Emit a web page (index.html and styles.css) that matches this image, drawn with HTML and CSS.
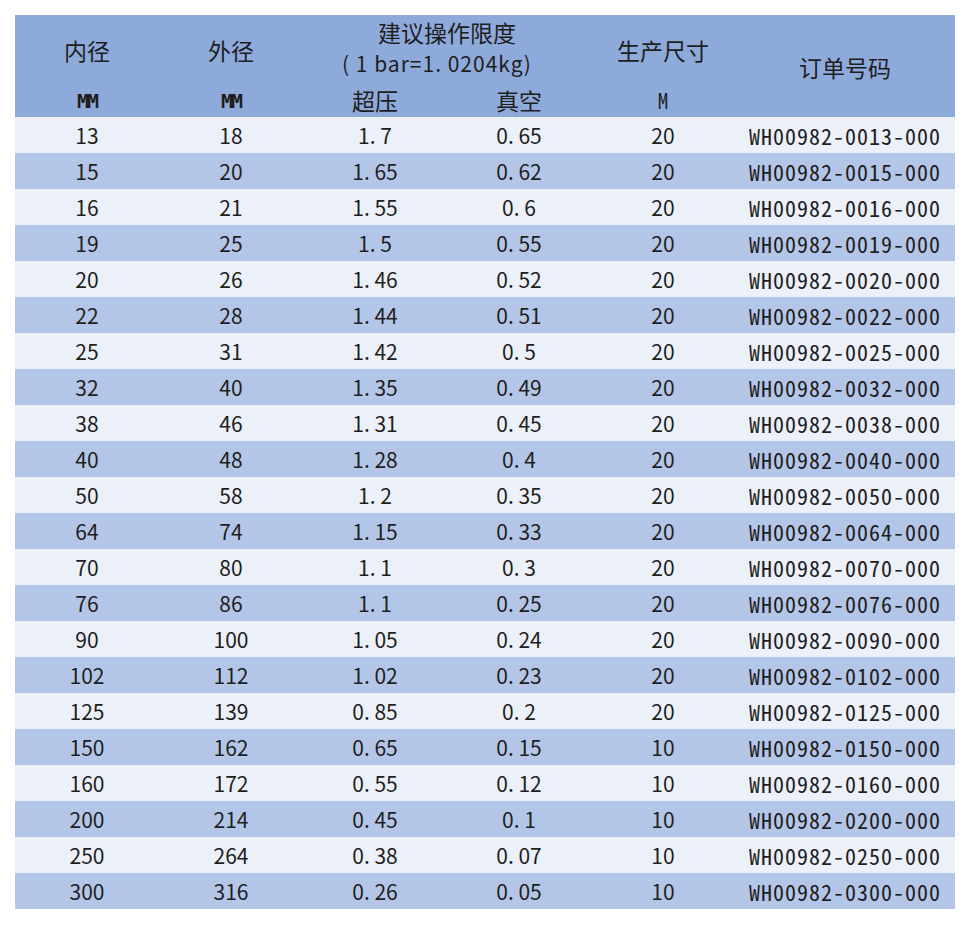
FILE: index.html
```html
<!DOCTYPE html>
<html lang="zh-CN">
<head>
<meta charset="utf-8">
<title>规格表</title>
<link rel="stylesheet" href="styles.css">
</head>
<body>
<table class="spec">
  <colgroup>
    <col class="c-n"><col class="c-n"><col class="c-n"><col class="c-n"><col class="c-n"><col class="c-code">
  </colgroup>
  <thead>
    <tr class="h1">
      <th rowspan="2" class="title">内径</th>
      <th rowspan="2" class="title">外径</th>
      <th colspan="2" class="title">建议操作限度</th>
      <th rowspan="2" class="title">生产尺寸</th>
      <th rowspan="3" class="title code-title">订单号码</th>
    </tr>
    <tr class="h2">
      <th colspan="2" class="note">( 1 bar=1. 0204kg)</th>
    </tr>
    <tr class="h3">
      <th class="unit">MM</th>
      <th class="unit">MM</th>
      <th class="title sub-l">超压</th>
      <th class="title sub-r">真空</th>
      <th class="unit-m">M</th>
    </tr>
  </thead>
  <tbody>
    <tr><td>13</td><td>18</td><td>1. 7</td><td>0. 65</td><td>20</td><td class="code">WH00982-0013-000</td></tr>
    <tr><td>15</td><td>20</td><td>1. 65</td><td>0. 62</td><td>20</td><td class="code">WH00982-0015-000</td></tr>
    <tr><td>16</td><td>21</td><td>1. 55</td><td>0. 6</td><td>20</td><td class="code">WH00982-0016-000</td></tr>
    <tr><td>19</td><td>25</td><td>1. 5</td><td>0. 55</td><td>20</td><td class="code">WH00982-0019-000</td></tr>
    <tr><td>20</td><td>26</td><td>1. 46</td><td>0. 52</td><td>20</td><td class="code">WH00982-0020-000</td></tr>
    <tr><td>22</td><td>28</td><td>1. 44</td><td>0. 51</td><td>20</td><td class="code">WH00982-0022-000</td></tr>
    <tr><td>25</td><td>31</td><td>1. 42</td><td>0. 5</td><td>20</td><td class="code">WH00982-0025-000</td></tr>
    <tr><td>32</td><td>40</td><td>1. 35</td><td>0. 49</td><td>20</td><td class="code">WH00982-0032-000</td></tr>
    <tr><td>38</td><td>46</td><td>1. 31</td><td>0. 45</td><td>20</td><td class="code">WH00982-0038-000</td></tr>
    <tr><td>40</td><td>48</td><td>1. 28</td><td>0. 4</td><td>20</td><td class="code">WH00982-0040-000</td></tr>
    <tr><td>50</td><td>58</td><td>1. 2</td><td>0. 35</td><td>20</td><td class="code">WH00982-0050-000</td></tr>
    <tr><td>64</td><td>74</td><td>1. 15</td><td>0. 33</td><td>20</td><td class="code">WH00982-0064-000</td></tr>
    <tr><td>70</td><td>80</td><td>1. 1</td><td>0. 3</td><td>20</td><td class="code">WH00982-0070-000</td></tr>
    <tr><td>76</td><td>86</td><td>1. 1</td><td>0. 25</td><td>20</td><td class="code">WH00982-0076-000</td></tr>
    <tr><td>90</td><td>100</td><td>1. 05</td><td>0. 24</td><td>20</td><td class="code">WH00982-0090-000</td></tr>
    <tr><td>102</td><td>112</td><td>1. 02</td><td>0. 23</td><td>20</td><td class="code">WH00982-0102-000</td></tr>
    <tr><td>125</td><td>139</td><td>0. 85</td><td>0. 2</td><td>20</td><td class="code">WH00982-0125-000</td></tr>
    <tr><td>150</td><td>162</td><td>0. 65</td><td>0. 15</td><td>10</td><td class="code">WH00982-0150-000</td></tr>
    <tr><td>160</td><td>172</td><td>0. 55</td><td>0. 12</td><td>10</td><td class="code">WH00982-0160-000</td></tr>
    <tr><td>200</td><td>214</td><td>0. 45</td><td>0. 1</td><td>10</td><td class="code">WH00982-0200-000</td></tr>
    <tr><td>250</td><td>264</td><td>0. 38</td><td>0. 07</td><td>10</td><td class="code">WH00982-0250-000</td></tr>
    <tr><td>300</td><td>316</td><td>0. 26</td><td>0. 05</td><td>10</td><td class="code">WH00982-0300-000</td></tr>
  </tbody>
</table>
</body>
</html>
```

FILE: styles.css
```css
html, body {
  margin: 0;
  padding: 0;
  background: #ffffff;
}

body {
  padding: 15px;
  font-family: "Noto Sans CJK SC", "Noto Sans", sans-serif;
  color: #1e1e1e;
}

.spec {
  border-collapse: collapse;
  border-spacing: 0;
  table-layout: fixed;
  width: 940px;
}

.c-n { width: 144px; }
.c-code { width: 220px; }

.spec th,
.spec td {
  padding: 0;
  text-align: center;
  vertical-align: middle;
  font-weight: 400;
  white-space: nowrap;
}

.spec thead th {
  background: #8eaadb;
}

.h1 { height: 32px; }
.h2 { height: 35px; }
.h3 { height: 35px; }

.title {
  font-size: 23px;
  line-height: 28px;
}

.h1 th.title { padding-top: 2px; }

.spec th.note {
  font-size: 21px;
  line-height: 24px;
  letter-spacing: 1px;
  padding-bottom: 4px;
  padding-right: 20px;
}

.code-title { padding-top: 4px; }

.sub-l { padding-right: 4px; }
.sub-r { padding-right: 14px; }

.spec th.unit {
  font-family: "DejaVu Sans Mono", monospace;
  font-weight: 700;
  font-size: 20px;
  letter-spacing: -2px;
  padding-top: 2px;
}

.unit-m {
  font-family: "Noto Sans Mono CJK SC", "DejaVu Sans Mono", monospace;
  font-size: 21px;
}

.spec tbody tr { height: 36px; }

.spec tbody tr:nth-child(odd) td { background: #ecf0f8; }
.spec tbody tr:nth-child(even) td { background: #b4c6e7; }

.spec td {
  font-size: 21px;
  line-height: 28px;
}

.spec td.code {
  font-family: "Noto Sans Mono CJK SC", "DejaVu Sans Mono", monospace;
  font-size: 22px;
  letter-spacing: 1px;
}
```
